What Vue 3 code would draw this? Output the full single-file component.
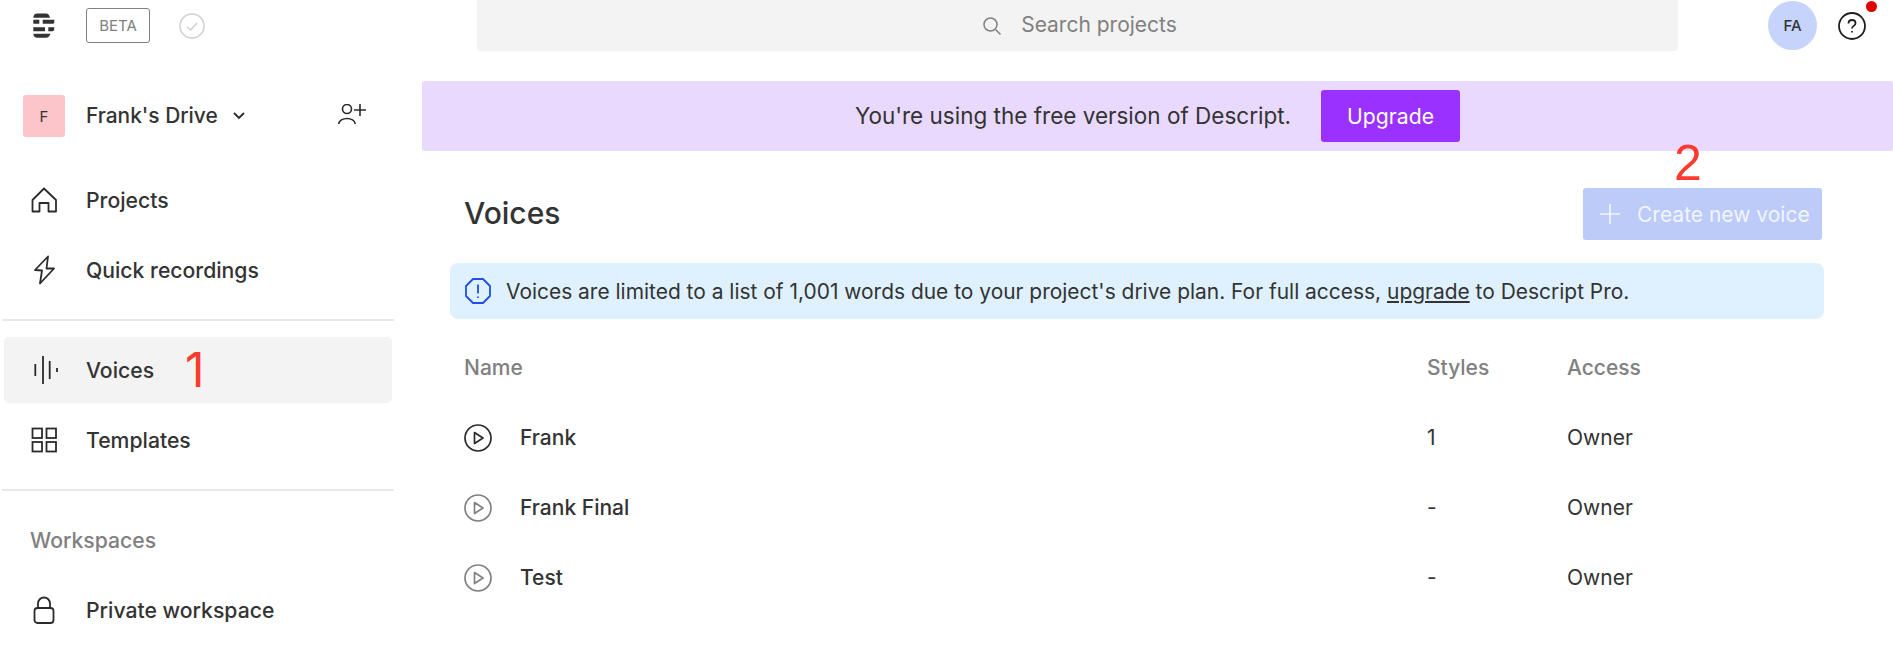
<script setup>
const voices = [
  { name: 'Frank', styles: '1', access: 'Owner', active: true },
  { name: 'Frank Final', styles: '-', access: 'Owner', active: false },
  { name: 'Test', styles: '-', access: 'Owner', active: false },
]
</script>

<template>
  <div class="app">
    <header class="topbar">
      <div class="top-left">
        <svg class="logo" width="24" height="26" viewBox="0 0 24 26" fill="#333">
          <path d="M1.300 4.700C1.300 2 3 .5 5.500.5H14c2 0 3.500 1.500 4 4.200z" />
          <path d="M1.300 6.800h6v4h-6zM10.700 6.800h11.600v1.700c0 1.300-.5 2.300-1 2.300H10.700z" />
          <path d="M1.300 14.200H13v4H1.300zM16.300 14.200h6v1.500c0 1-.5 2-1.500 2.500h-4.500z" />
          <path d="M1.300 20.800H18.500c-1 2.500-2.500 4-4.500 4H5.500c-2.500 0-4.200-1.500-4.200-4z" />
        </svg>
        <span class="beta">BETA</span>
        <svg class="saved" width="26" height="26" viewBox="0 0 26 26" fill="none" stroke="#cfcfcf" stroke-width="1.500">
          <circle cx="13" cy="13" r="12" />
          <path d="M8 14l3.500 3L18 10" />
        </svg>
      </div>
      <div class="search">
        <svg width="20" height="20" viewBox="0 0 20 20" fill="none" stroke="#808080" stroke-width="1.500">
          <circle cx="8.500" cy="8.500" r="6.500" />
          <path d="M13.500 13.500l5 5" />
        </svg>
        <span class="search-text">Search projects</span>
      </div>
      <div class="top-right">
        <div class="avatar">FA</div>
        <div class="help">
          <svg width="28" height="28" viewBox="0 0 28 28" fill="none" stroke="#1f1f1f" stroke-width="1.800">
            <circle cx="14" cy="14" r="13" />
            <path d="M10.500 11.500c0-2 1.500-3.500 3.500-3.500s3.500 1.300 3.500 3.200c0 2.600-3.500 2.700-3.500 5.300" />
            <path d="M14 19v1.500" />
          </svg>
          <span class="dot"></span>
        </div>
      </div>
    </header>

    <div class="body">
      <aside class="sidebar">
        <div class="drive">
          <div class="drive-mark">F</div>
          <span class="drive-name">Frank's Drive</span>
          <svg class="chev" width="14" height="10" viewBox="0 0 14 10" fill="none" stroke="#2b2b2b" stroke-width="1.800">
            <path d="M2 2l5 5 5-5" />
          </svg>
          <svg class="invite" width="28" height="20" viewBox="0 0 28 20" fill="none" stroke="#2b2b2b" stroke-width="1.600">
            <circle cx="9" cy="5" r="4.500" />
            <path d="M.7 20C1 16.500 5 14.500 9 14.500s8 2 8.300 5.500" />
            <path d="M16 6h12M22 0v12" />
          </svg>
        </div>

        <nav class="group">
          <a class="item">
            <svg width="26" height="26" viewBox="0 0 26 26" fill="none" stroke="#2b2b2b" stroke-width="1.800">
              <path d="M1.500 13L13 1.500 25 13v11.500h-7.500V16h-9v8.500h-7z" stroke-linejoin="round" />
            </svg>
            <span>Projects</span>
          </a>
          <a class="item">
            <svg width="26" height="28" viewBox="0 0 26 28" fill="none" stroke="#2b2b2b" stroke-width="1.800">
              <path d="M17 .5L4 14l7 .5-2 13 14-15h-7.500z" stroke-linejoin="round" />
            </svg>
            <span>Quick recordings</span>
          </a>
        </nav>
        <hr class="rule" />
        <nav class="group">
          <a class="item current">
            <svg width="26" height="28" viewBox="0 0 26 28" fill="none" stroke="#2b2b2b" stroke-width="1.800">
              <path d="M4.300 8v12M12 0v28M18.700 5v18M26 12v4" />
            </svg>
            <span>Voices</span>
            <span class="mark one">1</span>
          </a>
          <a class="item">
            <svg width="26" height="26" viewBox="0 0 26 26" fill="none" stroke="#2b2b2b" stroke-width="1.800">
              <rect x="1.500" y="1.500" width="9.500" height="9.500" />
              <rect x="15.500" y="1.500" width="9.500" height="9.500" />
              <rect x="1.500" y="15" width="9.500" height="9.500" />
              <rect x="15.500" y="15" width="9.500" height="9.500" />
            </svg>
            <span>Templates</span>
          </a>
        </nav>
        <hr class="rule" />
        <div class="section">Workspaces</div>
        <a class="item">
          <svg width="26" height="27" viewBox="0 0 26 27" fill="none" stroke="#2b2b2b" stroke-width="1.800">
            <rect x="3.500" y="11" width="19" height="15" rx="3" />
            <path d="M7 11V6.500a6 6 0 0 1 12 0V11" />
          </svg>
          <span>Private workspace</span>
        </a>
      </aside>

      <main class="main">
        <div class="banner">
          <span class="banner-text">You're using the free version of Descript.</span>
          <button class="upgrade">Upgrade</button>
        </div>
        <div class="content">
          <div class="head">
            <h1>Voices</h1>
            <div class="create-wrap">
              <span class="mark two">2</span>
              <button class="create">
                <svg width="20" height="20" viewBox="0 0 20 20" fill="none" stroke="#f2f5ff" stroke-width="1.700">
                  <path d="M10 0v20M0 10h20" />
                </svg>
                <span>Create new voice</span>
              </button>
            </div>
          </div>
          <div class="notice">
            <svg width="26" height="26" viewBox="0 0 26 26" fill="none" stroke="#1f4fe8" stroke-width="1.800">
              <path d="M8 1h10l7 7v10l-7 7H8l-7-7V8z" stroke-linejoin="round" />
              <path d="M13 6.500v9M13 18.500v1.500" />
            </svg>
            <span>Voices are limited to a list of 1,001 words due to your project's drive plan. For full access, <u>upgrade</u> to Descript Pro.</span>
          </div>
          <div class="table">
            <div class="row th">
              <span>Name</span><span>Styles</span><span>Access</span>
            </div>
            <div v-for="v in voices" :key="v.name" class="row">
              <span class="name-cell">
                <svg width="28" height="28" viewBox="0 0 28 28" fill="none" :stroke="v.active ? '#2b2b2b' : '#808080'" stroke-width="1.700">
                  <circle cx="14" cy="14" r="13" />
                  <path d="M10.500 8.500L19 14l-8.500 5.500z" stroke-linejoin="round" />
                </svg>
                <span class="vname">{{ v.name }}</span>
              </span>
              <span>{{ v.styles }}</span>
              <span>{{ v.access }}</span>
            </div>
          </div>
        </div>
      </main>
    </div>
  </div>
</template>

<style>
html, body { margin: 0; background: #fff; overflow: hidden; }
</style>

<style scoped>
.app {
  width: 1893px;
  height: 649px;
  overflow: hidden;
  background: #fff;
  color: #333;
  font-family: Inter, "Liberation Sans", sans-serif;
  font-size: 21px;
}
.topbar { display: flex; height: 51px; align-items: center; }
.top-left { width: 477px; display: flex; align-items: center; padding-left: 32px; box-sizing: border-box; }
.logo { margin-right: 30px; }
.beta {
  width: 64px; height: 35px; box-sizing: border-box; border: 1px solid #808080; border-radius: 3px;
  font-size: 15px; color: #808080; display: flex; align-items: center; justify-content: center; margin-right: 29px;
}
.search {
  width: 1201px; height: 51px; background: #f3f3f3; border-radius: 0 0 3px 3px;
  display: flex; align-items: center; justify-content: center; gap: 19px; color: #808080; padding-left: 4px; box-sizing: border-box;
}
.search-text { margin-top: -2px; }
.top-right { display: flex; align-items: center; padding-left: 90px; }
.avatar {
  width: 49px; height: 49px; border-radius: 50%; background: #c6d3fa; font-size: 15px; font-weight: 500;
  display: flex; align-items: center; justify-content: center;
}
.help { position: relative; margin-left: 21px; width: 28px; height: 28px; }
.dot { position: absolute; right: -11px; top: -11px; width: 11px; height: 11px; border-radius: 50%; background: #e00000; }

.body { display: flex; }
.sidebar { width: 396px; flex: none; padding: 0 2px; box-sizing: border-box; margin-right: 26px; }
.drive { display: flex; align-items: center; height: 42px; margin-top: 44px; padding-left: 21px; margin-bottom: 30px; }
.drive-mark {
  width: 42px; height: 42px; border-radius: 3px; background: #fcc5c9; font-size: 15px;
  display: flex; align-items: center; justify-content: center; margin-right: 21px;
}
.drive-name { font-weight: 500; font-size: 20.9px; margin-top: -1px; }
.chev { margin-left: 14px; }
.invite { margin-left: auto; margin-right: 28px; margin-top: -4px; }
.group { display: flex; flex-direction: column; gap: 4px; }
.item {
  display: flex; align-items: center; height: 66px; margin: 0 2px; border-radius: 5px;
  padding-left: 27px; font-weight: 500; font-size: 21.2px; position: relative;
}
.item > span:not(.mark) { margin-top: -1px; }
.item svg { flex: none; margin-right: 29px; overflow: visible; }
.current { background: #f3f3f3; }
.rule { border: 0; border-top: 2px solid #e8e8e8; margin: 16px 0; }
.section { color: #808080; font-weight: 500; font-size: 21.2px; padding-left: 28px; height: 24px; line-height: 24px; margin: 37px 0 25px; }
.mark { color: #fb3b30; font-weight: 400; line-height: 1; }
.one { margin-left: 31px; font-family: Inter, sans-serif; font-size: 48px; }
.two { font-family: "Liberation Sans", sans-serif; font-size: 50px; }

.main { flex: 1; min-width: 0; }
.banner {
  height: 70px; margin-top: 30px; background: #e9d9ff; border-radius: 3px; display: flex; align-items: center;
  justify-content: center; gap: 30px; box-sizing: border-box;
}
.banner-text { font-size: 22.5px; margin-top: -1px; }
.upgrade {
  width: 139px; height: 52px; border: 0; border-radius: 3px; background: #9a31ff; color: #fff;
  font: inherit; font-size: 21.2px;
}
.content { width: 1374px; margin-left: 28px; }
.head { display: flex; align-items: center; justify-content: space-between; height: 52px; margin-top: 37px; padding: 0 2px 0 14px; }
h1 { margin: 0; font-size: 30px; font-weight: 500; margin-top: -2px; }
.create-wrap { position: relative; }
.two { position: absolute; left: 91px; top: -50px; }
.create {
  width: 239px; height: 52px; border: 0; border-radius: 3px; background: #bccbf8; color: #f2f5ff;
  font: inherit; font-size: 21px; display: flex; align-items: center; gap: 17px; padding: 0 0 0 17px;
}
.notice {
  height: 56px; margin-top: 23px; background: #dff1ff; border-radius: 8px; display: flex; align-items: center;
  gap: 15px; padding-left: 15px; white-space: nowrap; font-size: 20.95px;
}
.row { display: grid; grid-template-columns: 963px 140px 1fr; align-items: center; height: 70px; padding-left: 14px; }
.row > span { margin-top: -1px; }
.th { color: #808080; font-weight: 500; height: 48px; margin: 24px 0 12px; }
.th > span { margin-top: 1px; }
.name-cell { display: flex; align-items: center; gap: 28px; }
.name-cell svg { margin-top: 1px; }
.vname { font-weight: 500; }
</style>
